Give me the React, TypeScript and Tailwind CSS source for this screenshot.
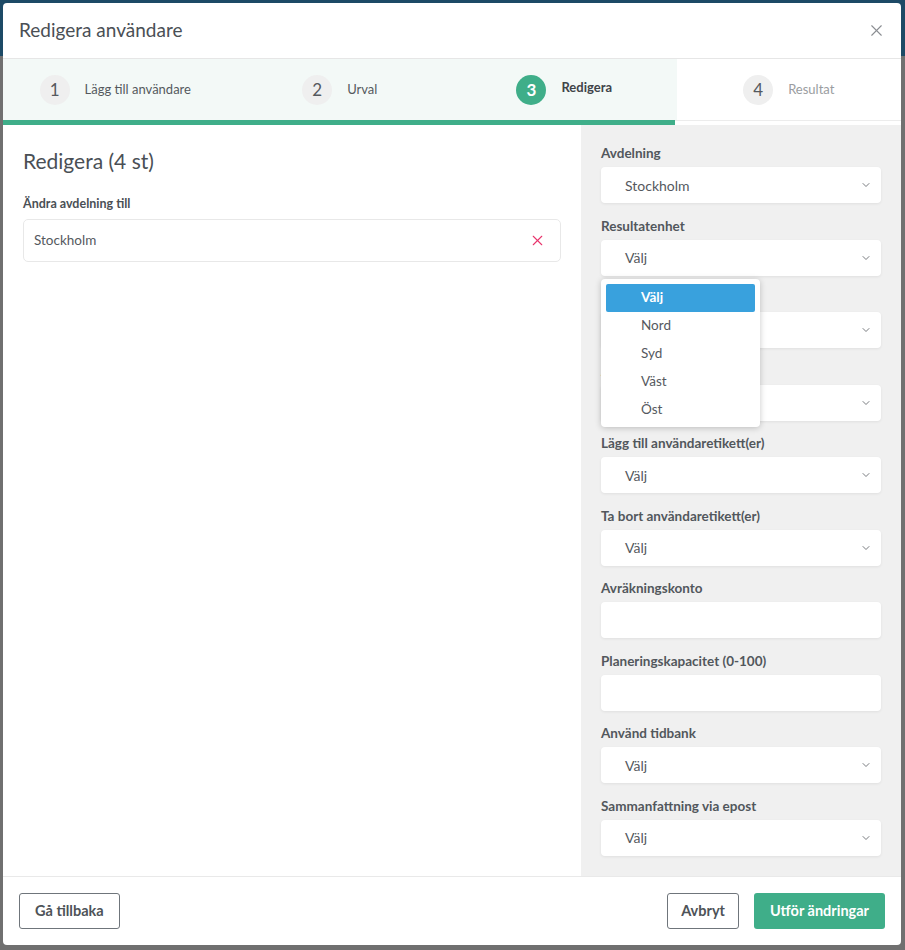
import { ChevronDown, X } from 'lucide-react';

const font = { fontFamily: 'Lato, "Open Sans", "Liberation Sans", sans-serif' };

const steps = [
  { n: 1, label: 'Lägg till användare', state: 'done' },
  { n: 2, label: 'Urval', state: 'done' },
  { n: 3, label: 'Redigera', state: 'active' },
  { n: 4, label: 'Resultat', state: 'todo' },
] as const;

type Field = { label: string; kind: 'select' | 'input'; value?: string };

const fields: Field[] = [
  { label: 'Avdelning', kind: 'select', value: 'Stockholm' },
  { label: 'Resultatenhet', kind: 'select', value: 'Välj' },
  { label: 'Kostnadsställe', kind: 'select', value: 'Välj' },
  { label: 'Anställningsform', kind: 'select', value: 'Välj' },
  { label: 'Lägg till användaretikett(er)', kind: 'select', value: 'Välj' },
  { label: 'Ta bort användaretikett(er)', kind: 'select', value: 'Välj' },
  { label: 'Avräkningskonto', kind: 'input' },
  { label: 'Planeringskapacitet (0-100)', kind: 'input' },
  { label: 'Använd tidbank', kind: 'select', value: 'Välj' },
  { label: 'Sammanfattning via epost', kind: 'select', value: 'Välj' },
];

const options = ['Välj', 'Nord', 'Syd', 'Väst', 'Öst'];

function Step({ n, label, state }: { n: number; label: string; state: 'done' | 'active' | 'todo' }) {
  return (
    <div className={`flex-1 flex items-center justify-center ${state === 'todo' ? 'bg-white' : 'bg-[#f3f9f7]'}`}>
      <div className="flex items-center gap-[15px]">
        <div
          className={`w-[30px] h-[30px] rounded-full flex items-center justify-center text-[17px] ${
            state === 'active' ? 'bg-[#3fae89] text-white font-bold' : 'bg-[#efefef] text-[#55595e]'
          } ${state === 'todo' ? 'text-[#8a8d91]' : ''}`}
        >
          {n}
        </div>
        <span
          className={`text-[13px] ${
            state === 'active'
              ? 'font-bold text-[#3f4449] -mt-[3px]'
              : state === 'todo'
                ? 'text-[#9a9da1]'
                : 'text-[#55595e]'
          }`}
        >
          {label}
        </span>
      </div>
    </div>
  );
}

// open option list of "Resultatenhet", lies over the fields below it
function Dropdown() {
  return (
    <div className="absolute left-0 top-[61px] w-[159px] bg-white rounded-[4px] shadow-[0_1px_6px_rgba(0,0,0,0.22)] pt-[5px] pb-[3px] px-[5px] z-10">
      {options.map((o, i) => (
        <div
          key={o}
          className={`h-7 flex items-center pl-[35px] text-[13.5px] rounded-[2px] ${
            i === 0 ? 'bg-[#39a1dd] text-white font-bold' : 'text-[#55595e]'
          }`}
        >
          {o}
        </div>
      ))}
    </div>
  );
}

export default function App() {
  return (
    <div className="relative w-[905px] h-[950px] bg-[#707070] overflow-hidden" style={font}>
      <div className="h-[56px] bg-[#1d4a66]" />

      <div className="absolute left-[3px] top-[3px] w-[898px] h-[942px] bg-white rounded-[4px] flex flex-col overflow-hidden">
        {/* header */}
        <div className="h-[56px] shrink-0 flex items-center justify-between pl-[16px] pr-[15px] border-b border-[#e6e6e6]">
          <h1 className="text-[19px] text-[#4a4f55]">Redigera användare</h1>
          <X size={19} strokeWidth={1.4} className="text-[#8b8e92]" />
        </div>

        {/* steps */}
        <div className="shrink-0 flex flex-col">
          <div className="h-[61px] flex">
            {steps.map(s => (
              <Step key={s.n} {...s} />
            ))}
          </div>
          <div className="h-[5px] flex">
            <div className="w-[672px] bg-[#3fae89]" />
            <div className="flex-1 bg-white border-t border-[#ececec]" />
          </div>
        </div>

        {/* body */}
        <div className="flex-1 flex min-h-0">
          <div className="flex-1 px-[20px] pt-[22px]">
            <h2 className="text-[21px] text-[#4a4f55] leading-[28px]">Redigera (4 st)</h2>
            <div className="mt-[21px] text-[12.5px] font-bold text-[#4a4f55] leading-[16px]">Ändra avdelning till</div>
            <div className="mt-[7px] h-[43px] border border-[#e8e8e8] rounded-[5px] flex items-center justify-between pl-[10px] pr-[14px]">
              <span className="text-[13.5px] text-[#55595e]">Stockholm</span>
              <X size={17} strokeWidth={1.5} className="text-[#e8356c]" />
            </div>
          </div>

          <div className="w-[320px] bg-[#f0f0f0] px-[20px] pt-[20px] flex flex-col gap-[14.5px]">
            {fields.map((f, i) => (
              <div key={f.label} className="relative flex flex-col gap-[6px]">
                <span className="text-[13.5px] font-bold text-[#52575c] leading-[16px]">{f.label}</span>
                <div className="h-[36px] bg-white rounded-[4px] shadow-[0_1px_3px_rgba(0,0,0,0.07)] flex items-center justify-between pl-[24px] pr-[9px]">
                  {f.kind === 'select' && (
                    <>
                      <span className="text-[14px] text-[#55595e]">{f.value}</span>
                      <ChevronDown size={12} strokeWidth={1.6} className="text-[#55595e]" />
                    </>
                  )}
                </div>
                {i === 1 && <Dropdown />}
              </div>
            ))}
          </div>
        </div>

        {/* footer */}
        <div className="h-[69px] shrink-0 border-t border-[#e9e9e9] flex items-center justify-between px-[16px]">
          <button className="h-[36px] px-[15px] border border-[#6f757b] rounded-[3px] text-[14.5px] font-bold text-[#4e5358]">
            Gå tillbaka
          </button>
          <div className="flex gap-[15px]">
            <button className="h-[36px] px-[13px] border border-[#6f757b] rounded-[3px] text-[14.5px] font-bold text-[#4e5358]">
              Avbryt
            </button>
            <button className="h-[36px] px-[16px] bg-[#3fae89] rounded-[3px] text-[14.5px] font-bold text-white">
              Utför ändringar
            </button>
          </div>
        </div>
      </div>
    </div>
  );
}
